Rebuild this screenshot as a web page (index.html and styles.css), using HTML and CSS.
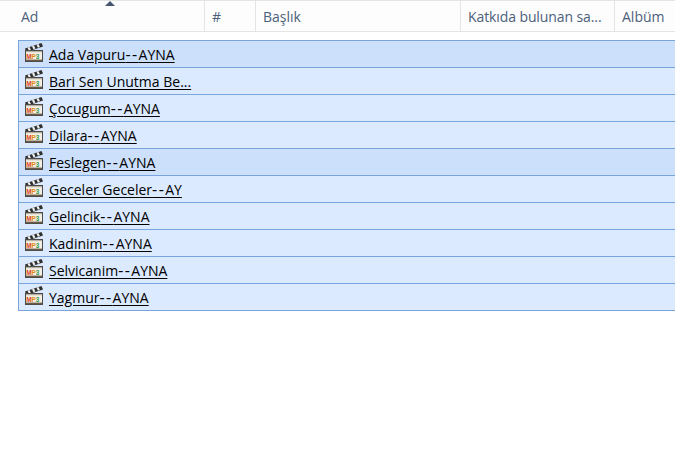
FILE: index.html
```html
<!DOCTYPE html>
<html lang="tr">
<head>
<meta charset="utf-8">
<title>Dosyalar</title>
<link rel="stylesheet" href="styles.css">
</head>
<body>
<svg class="defs" width="0" height="0" aria-hidden="true">
  <symbol id="clapper" viewBox="0 0 20 20">
    <path d="M1 6.5 L17.5 1 L19 4.5 L2.5 10Z" fill="#2f2f2f"/>
    <path d="M3.5 5.7l2-.7 1.4 3-2 .7zM8 4.2l2-.7 1.4 3-2 .7zM12.5 2.7l2-.7 1.4 3-2 .7z" fill="#f0f0f0"/>
    <rect x="1.5" y="8.5" width="17" height="11" fill="#f4f0e6" stroke="#4a4a4a" stroke-width="1"/>
    <rect x="2" y="17.6" width="16" height="1.6" fill="#6b5a48"/>
    <rect x="2" y="9" width="16" height="1.2" fill="#b8b0a0"/>
  </symbol>
</svg>
<header class="columns">
  <div class="col col-name">Ad<span class="sort"></span></div>
  <div class="col col-num">#</div>
  <div class="col col-title">Başlık</div>
  <div class="col col-artist">Katkıda bulunan sa...</div>
  <div class="col col-album">Albüm</div>
</header>
<ul class="files">
  <li class="file hot"><svg class="icon" viewBox="0 0 20 20"><use href="#clapper"/><text class="icon-text" x="2.2" y="16.6"><tspan class="m">M</tspan><tspan class="p">P</tspan><tspan class="t">3</tspan></text></svg><span class="name">Ada Vapuru<span class="dash">--</span>AYNA</span></li>
  <li class="file"><svg class="icon" viewBox="0 0 20 20"><use href="#clapper"/><text class="icon-text" x="2.2" y="16.6"><tspan class="m">M</tspan><tspan class="p">P</tspan><tspan class="t">3</tspan></text></svg><span class="name">Bari Sen Unutma Be...</span></li>
  <li class="file"><svg class="icon" viewBox="0 0 20 20"><use href="#clapper"/><text class="icon-text" x="2.2" y="16.6"><tspan class="m">M</tspan><tspan class="p">P</tspan><tspan class="t">3</tspan></text></svg><span class="name">Çocugum<span class="dash">--</span>AYNA</span></li>
  <li class="file"><svg class="icon" viewBox="0 0 20 20"><use href="#clapper"/><text class="icon-text" x="2.2" y="16.6"><tspan class="m">M</tspan><tspan class="p">P</tspan><tspan class="t">3</tspan></text></svg><span class="name">Dilara<span class="dash">--</span>AYNA</span></li>
  <li class="file hot"><svg class="icon" viewBox="0 0 20 20"><use href="#clapper"/><text class="icon-text" x="2.2" y="16.6"><tspan class="m">M</tspan><tspan class="p">P</tspan><tspan class="t">3</tspan></text></svg><span class="name">Feslegen<span class="dash">--</span>AYNA</span></li>
  <li class="file"><svg class="icon" viewBox="0 0 20 20"><use href="#clapper"/><text class="icon-text" x="2.2" y="16.6"><tspan class="m">M</tspan><tspan class="p">P</tspan><tspan class="t">3</tspan></text></svg><span class="name">Geceler Geceler<span class="dash">--</span>AY</span></li>
  <li class="file"><svg class="icon" viewBox="0 0 20 20"><use href="#clapper"/><text class="icon-text" x="2.2" y="16.6"><tspan class="m">M</tspan><tspan class="p">P</tspan><tspan class="t">3</tspan></text></svg><span class="name">Gelincik<span class="dash">--</span>AYNA</span></li>
  <li class="file"><svg class="icon" viewBox="0 0 20 20"><use href="#clapper"/><text class="icon-text" x="2.2" y="16.6"><tspan class="m">M</tspan><tspan class="p">P</tspan><tspan class="t">3</tspan></text></svg><span class="name">Kadinim<span class="dash">--</span>AYNA</span></li>
  <li class="file"><svg class="icon" viewBox="0 0 20 20"><use href="#clapper"/><text class="icon-text" x="2.2" y="16.6"><tspan class="m">M</tspan><tspan class="p">P</tspan><tspan class="t">3</tspan></text></svg><span class="name">Selvicanim<span class="dash">--</span>AYNA</span></li>
  <li class="file"><svg class="icon" viewBox="0 0 20 20"><use href="#clapper"/><text class="icon-text" x="2.2" y="16.6"><tspan class="m">M</tspan><tspan class="p">P</tspan><tspan class="t">3</tspan></text></svg><span class="name">Yagmur<span class="dash">--</span>AYNA</span></li>
</ul>
</body>
</html>
```
FILE: styles.css
```css
html, body {
  margin: 0;
  padding: 0;
  height: 467px;
  overflow: hidden;
  background: #fff;
  font-family: "Open Sans", "Noto Sans", sans-serif;
}
.defs { display: block; height: 0; }
.columns {
  display: flex;
  height: 30px;
  border-top: 1px solid #e5e5e5;
  border-bottom: 1px solid #e5e5e5;
  background: #fdfdfd;
  color: #4c607a;
  font-size: 14px;
}
.col {
  position: relative;
  flex: none;
  box-sizing: border-box;
  height: 30px;
  line-height: 32px;
  white-space: nowrap;
  border-right: 1px solid #e5e5e5;
  padding-left: 7px;
}
.col-name { width: 205px; padding-left: 21px; }
.col-num { width: 51px; }
.col-title { width: 205px; }
.col-artist { width: 154px; letter-spacing: -0.1px; }
.col-album { flex: 1; border-right: 0; }
.sort {
  position: absolute;
  left: 105px;
  top: 0;
  width: 0;
  height: 0;
  border-left: 5px solid transparent;
  border-right: 5px solid transparent;
  border-bottom: 5px solid #44576f;
}
.files {
  list-style: none;
  margin: 8px 0 0 18px;
  padding: 0;
  border-top: 1px solid #7aa5dc;
}
.file {
  display: flex;
  align-items: center;
  box-sizing: border-box;
  height: 27px;
  padding-left: 5px;
  background: #dbeaff;
  border-left: 1px solid #7aa5dc;
  border-bottom: 1px solid #7aa5dc;
}
.file.hot { background: #cde0fb; }
.icon {
  flex: none;
  width: 20px;
  height: 20px;
  margin: -5px 5px 0 0;
}
.icon-text {
  font-family: "Liberation Sans", sans-serif;
  font-size: 6.4px;
  font-weight: 700;
}
.icon-text .m { fill: #d8401a; }
.icon-text .p { fill: #e08a10; }
.icon-text .t { fill: #2f9a48; }
.name {
  font-size: 14px;
  color: #000;
  text-decoration: underline;
  text-underline-offset: 2px;
  white-space: nowrap;
}
.dash { font-size: 16px; letter-spacing: 1.4px; line-height: 1; }
```
